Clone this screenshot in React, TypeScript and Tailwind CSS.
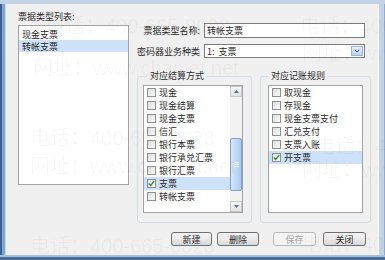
import { ChevronDown } from "lucide-react";

const cjk = "font-['Noto_Sans_CJK_SC',sans-serif]";

const PAY = ["现金", "现金结算", "现金支票", "信汇", "银行本票", "银行承兑汇票", "银行汇票", "支票", "转帐支票"];
const RULES = ["取现金", "存现金", "现金支票支付", "汇兑支付", "支票入账", "开支票"];

function Check({ on }: { on?: boolean }) {
  return (
    <span className="w-[9px] h-[9px] border border-[#8e8f8f] bg-gradient-to-br from-[#dedede] to-[#fbfbfb] flex items-center justify-center shrink-0">
      {on && (
        <svg width="7" height="7" viewBox="0 0 7 7">
          <path d="M0.8 3.6 L2.7 5.4 L6.2 1.1" fill="none" stroke="#2f8f2f" strokeWidth="1.4" />
        </svg>
      )}
    </span>
  );
}

function Row({ label, on }: { label: string; on?: boolean }) {
  return (
    <div className={`h-[13px] flex items-center gap-[3px] pl-[3px] ${on ? "bg-[#cde1f8]" : ""}`}>
      <Check on={on} />
      <span className="text-[9px] leading-none text-[#2a2a2a]">{label}</span>
    </div>
  );
}

function ScrollBar() {
  return (
    <div className="w-[12px] flex flex-col bg-[#f2f2f2]">
      <div className="h-[11px] flex items-center justify-center border border-[#c9c9c9] bg-gradient-to-b from-[#f8f8f8] to-[#e2e2e2]">
        <svg width="5" height="3" viewBox="0 0 5 3">
          <path d="M0 3 L2.5 0 L5 3Z" fill="#5a6e90" />
        </svg>
      </div>
      <div className="flex-1 flex flex-col pt-[41px] pb-[10px]">
        <div className="h-[53px] rounded-[2px] border border-[#7fa3d1] bg-gradient-to-r from-[#d6e7fb] to-[#abc9ee] flex flex-col items-center justify-center gap-[1px]">
          <div className="w-[5px] h-px bg-[#eef5fd]" />
          <div className="w-[5px] h-px bg-[#eef5fd]" />
          <div className="w-[5px] h-px bg-[#eef5fd]" />
        </div>
      </div>
      <div className="h-[11px] flex items-center justify-center border border-[#c9c9c9] bg-gradient-to-b from-[#f8f8f8] to-[#e2e2e2]">
        <svg width="5" height="3" viewBox="0 0 5 3">
          <path d="M0 0 L2.5 3 L5 0Z" fill="#5a6e90" />
        </svg>
      </div>
    </div>
  );
}

function Btn({ label, w, disabled }: { label: string; w: string; disabled?: boolean }) {
  return (
    <div
      className={`${w} h-[14px] rounded-[3px] border flex items-center justify-center text-[9px] leading-none ${
        disabled
          ? "border-[#b8b8b8] bg-[#f4f4f4] text-[#a2a2a2]"
          : "border-[#707070] bg-gradient-to-b from-[#f4f4f4] via-[#ebebeb] to-[#d8d8d8] text-[#2a2a2a]"
      }`}
    >
      {label}
    </div>
  );
}

// faint watermark of the screenshot source
const WATERMARKS = [
  { t: "电话：400-665-0028", x: 45, y: 16 },
  { t: "电话：400-665-0028", x: 300, y: 16 },
  { t: "网址：www.chanjet.net", x: 33, y: 58 },
  { t: "网址：www.chanjet.net", x: 302, y: 43 },
  { t: "电话：400-665-0028", x: 30, y: 128 },
  { t: "电话：400-665-0028", x: 315, y: 136 },
  { t: "网址：www.chanjet.net", x: 30, y: 156 },
  { t: "网址：www.chanjet.net", x: 302, y: 160 },
  { t: "电话：400-665-0028", x: 30, y: 236 },
  { t: "电话：400-665-0028", x: 302, y: 234 },
];

export default function App() {
  return (
    <div className={`w-[385px] h-[260px] relative overflow-hidden bg-[#f0f0f0] flex flex-col ${cjk}`}>
      <div className="h-[4px] bg-[#c3d2e5]" />
      <div className="flex-1 flex">
        <div className="w-[6px] flex">
          <div className="w-[2px] bg-[#3f6192]" />
          <div className="w-[3px] bg-[#86a5cd]" />
          <div className="w-px bg-[#c9d7e9]" />
        </div>

        <div className="flex-1 flex pl-[12px]">
          <div className="w-[111px] flex flex-col">
            <div className="mt-[7px] h-[12px] text-[9px] leading-[12px] text-[#2a2a2a]">票据类型列表:</div>
            <div className="mt-[2px] h-[160px] border border-[#a3a3a3] bg-white pt-[2px]">
              <div className="h-[12px] flex items-center pl-[3px] text-[9px] leading-none text-[#2a2a2a]">现金支票</div>
              <div className="h-[12px] flex items-center pl-[3px] text-[9px] leading-none text-[#2a2a2a] bg-[#cde1f8]">转帐支票</div>
            </div>
          </div>

          <div className="ml-[8px] w-[234px] flex flex-col">
            <div className="mt-[19px] flex items-center">
              <div className="w-[63px] text-right text-[9px] leading-none text-[#2a2a2a]">票据类型名称:</div>
              <div className="ml-[4px] w-[161px] h-[15px] border border-[#7c7c7c] bg-white flex items-center pl-[2px] text-[9px] leading-none text-[#2a2a2a]">
                转帐支票
              </div>
            </div>
            <div className="mt-[6px] flex items-center">
              <div className="w-[63px] text-right text-[9px] leading-none text-[#2a2a2a]">密码器业务种类</div>
              <div className="ml-[4px] w-[161px] h-[14px] border border-[#7c7c7c] bg-white flex items-center">
                <span className="flex-1 pl-[2px] text-[9px] leading-none text-[#2a2a2a]">1:&nbsp;&nbsp;支票</span>
                <span className="w-[12px] h-[10px] mr-px border border-[#9ab6dc] bg-gradient-to-b from-[#e8f0fb] to-[#bcd2ee] flex items-center justify-center">
                  <ChevronDown size={8} strokeWidth={3} color="#2c4a78" />
                </span>
              </div>
            </div>

            <div className="mt-[12px] flex gap-[8px]">
              <fieldset className="w-[115px] border border-[#d3dbe3] rounded-[3px] px-[5px] pt-[3px] pb-[9px]">
                <legend className="ml-[4px] px-[3px] text-[9px] leading-[12px] text-[#2a2a2a]">对应结算方式</legend>
                <div className="w-[100px] h-[128px] border border-[#a3a3a3] bg-white flex">
                  <div className="flex-1">
                    {PAY.map((p) => (
                      <Row key={p} label={p} on={p === "支票"} />
                    ))}
                  </div>
                  <ScrollBar />
                </div>
              </fieldset>

              <fieldset className="w-[111px] border border-[#d3dbe3] rounded-[3px] px-[7px] pt-[3px] pb-[9px]">
                <legend className="ml-0 px-[3px] text-[9px] leading-[12px] text-[#2a2a2a]">对应记账规则</legend>
                <div className="w-[95px] h-[128px] border border-[#a3a3a3] bg-white">
                  {RULES.map((r) => (
                    <Row key={r} label={r} on={r === "开支票"} />
                  ))}
                </div>
              </fieldset>
            </div>

            <div className="mt-[9px] flex pl-[34px]">
              <Btn label="新建" w="w-[41px]" />
              <div className="ml-[5px]">
                <Btn label="删除" w="w-[42px]" />
              </div>
              <div className="ml-[14px]">
                <Btn label="保存" w="w-[43px]" disabled />
              </div>
              <div className="ml-[7px]">
                <Btn label="关闭" w="w-[43px]" />
              </div>
            </div>
          </div>
        </div>

        <div className="w-[7px] flex">
          <div className="w-px bg-[#fbfcfe]" />
          <div className="flex-1 bg-[#c2d3e8]" />
          <div className="w-px bg-[#8eaad0]" />
        </div>
      </div>
      <div className="h-[2px] bg-[#a9c0dc]" />
      <div className="h-[3px] bg-[#4b6d9e]" />

      <div className="absolute inset-0 pointer-events-none">
        {WATERMARKS.map((w, i) => (
          <span
            key={i}
            className="absolute whitespace-nowrap text-[20px] leading-none text-black/[0.035] font-['Liberation_Sans','Noto_Sans_CJK_SC',sans-serif]"
            style={{ left: w.x, top: w.y }}
          >
            {w.t}
          </span>
        ))}
      </div>
    </div>
  );
}
